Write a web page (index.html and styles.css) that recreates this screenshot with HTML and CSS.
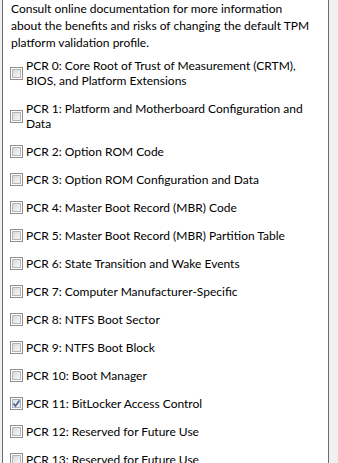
FILE: index.html
```html
<!DOCTYPE html>
<html>
<head>
<meta charset="utf-8">
<link rel="stylesheet" href="styles.css">
</head>
<body>
<div class="panel">
  <p class="intro">Consult online documentation for more information about the benefits and risks of changing the default TPM platform validation profile.</p>
  <ul class="list">
    <li class="item"><span class="box"></span><span class="label">PCR 0: Core Root of Trust of Measurement (CRTM), BIOS, and Platform Extensions</span></li>
    <li class="item"><span class="box"></span><span class="label">PCR 1: Platform and Motherboard Configuration and Data</span></li>
    <li class="item"><span class="box"></span><span class="label">PCR 2: Option ROM Code</span></li>
    <li class="item"><span class="box"></span><span class="label">PCR 3: Option ROM Configuration and Data</span></li>
    <li class="item"><span class="box"></span><span class="label">PCR 4: Master Boot Record (MBR) Code</span></li>
    <li class="item"><span class="box"></span><span class="label">PCR 5: Master Boot Record (MBR) Partition Table</span></li>
    <li class="item"><span class="box"></span><span class="label">PCR 6: State Transition and Wake Events</span></li>
    <li class="item"><span class="box"></span><span class="label">PCR 7: Computer Manufacturer-Specific</span></li>
    <li class="item"><span class="box"></span><span class="label">PCR 8: NTFS Boot Sector</span></li>
    <li class="item"><span class="box"></span><span class="label">PCR 9: NTFS Boot Block</span></li>
    <li class="item"><span class="box"></span><span class="label">PCR 10: Boot Manager</span></li>
    <li class="item"><span class="box checked"><svg class="tick" width="9" height="9" viewBox="0 0 9 9"><path d="M1.5 4.5 L3.5 7 L7.5 1.5" fill="none" stroke="#4a5b94" stroke-width="1.6"/></svg></span><span class="label">PCR 11: BitLocker Access Control</span></li>
    <li class="item"><span class="box"></span><span class="label">PCR 12: Reserved for Future Use</span></li>
    <li class="item"><span class="box"></span><span class="label">PCR 13: Reserved for Future Use</span></li>
  </ul>
</div>
</body>
</html>
```

FILE: styles.css
```css
html, body {
  margin: 0;
  padding: 0;
  height: 463px;
  overflow: hidden;
  background: #f0f0f0;
}
body {
  font-family: "Lato", "Open Sans", sans-serif;
  font-size: 12px;
  color: #000;
}
.panel {
  margin-left: 2px;
  width: 327px;
  min-height: 600px;
  background: #fff;
  border-left: 1px solid #6b6b6b;
  border-right: 1px solid #6b6b6b;
  padding: 0 14px 0 8px;
  box-sizing: border-box;
}
.intro {
  margin: 0;
  line-height: 17px;
}
.list {
  list-style: none;
  margin: 7px 0 0 0;
  padding: 0;
  display: flex;
  flex-direction: column;
  gap: 13px;
}
.item {
  display: flex;
  align-items: center;
  gap: 3px;
  margin-left: -1px;
}
.label {
  line-height: 15px;
}
.box {
  flex: none;
  width: 13px;
  height: 13px;
  box-sizing: border-box;
  border: 1px solid #8f8f8f;
  background: #fff;
  padding: 1px;
  display: flex;
}
.box::before {
  content: "";
  flex: 1;
  border: 1px solid #b6b6b6;
  background: linear-gradient(135deg, #d8d8d8 0%, #ebebeb 60%, #f8f8f8 100%);
}
.box.checked {
  position: relative;
}
.box.checked::before {
  border-color: #aab3c6;
  background: linear-gradient(135deg, #dfe3ea 0%, #eef0f4 100%);
}
.tick {
  position: absolute;
  left: 1px;
  top: 1px;
}
```
